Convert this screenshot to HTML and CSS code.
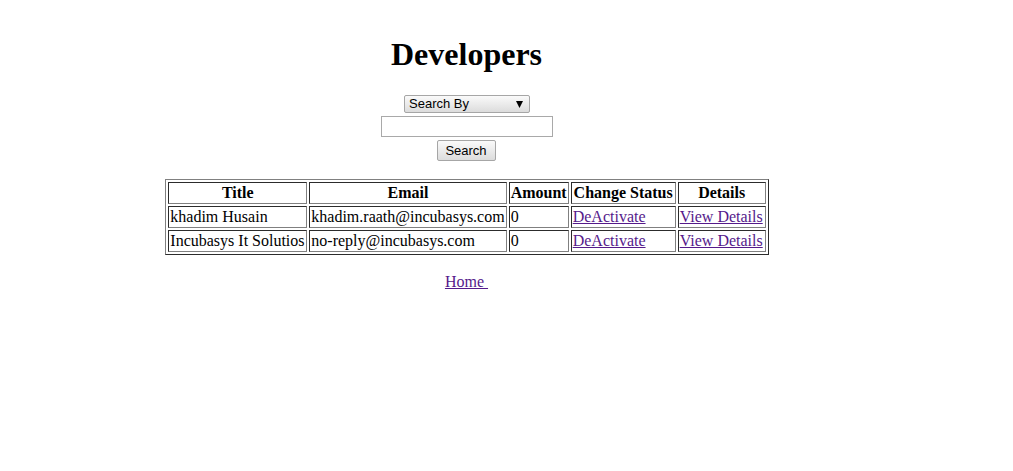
FILE: index.html
```html
<!DOCTYPE html>
<html>
<head>
<meta charset="utf-8">
<link rel="stylesheet" href="styles.css">
<title>Developers</title>
</head>
<body>
<div class="page">
  <h1 class="title">Developers</h1>
  <form class="search">
    <select class="search-by">
      <option>Search By</option>
    </select>
    <input class="search-input" type="text">
    <button class="search-btn" type="button">Search</button>
  </form>
  <table class="grid">
    <tr>
      <th class="col-title">Title</th>
      <th>Email</th>
      <th>Amount</th>
      <th class="col-status">Change Status</th>
      <th class="col-details">Details</th>
    </tr>
    <tr>
      <td>khadim Husain</td>
      <td>khadim.raath@incubasys.com</td>
      <td>0</td>
      <td><a href="#">DeActivate</a></td>
      <td><a href="#">View Details</a></td>
    </tr>
    <tr>
      <td>Incubasys It Solutios</td>
      <td>no-reply@incubasys.com</td>
      <td>0</td>
      <td><a href="#">DeActivate</a></td>
      <td><a href="#">View Details</a></td>
    </tr>
  </table>
  <p class="home"><a href="#">Home&nbsp;</a></p>
</div>
</body>
</html>
```

FILE: styles.css
```css
html, body {
  margin: 0;
  padding: 0;
  background: #fff;
}
body {
  font-family: "Liberation Serif", "Times New Roman", serif;
  font-size: 16px;
  color: #000;
}
.page {
  width: 918px;
  margin-left: 8px;
  padding-top: 36px;
  text-align: center;
}
.title {
  font-size: 32px;
  font-weight: bold;
  margin: 0 0 22px;
  padding-right: 1px;
  line-height: 37px;
}
.search {
  display: flex;
  flex-direction: column;
  align-items: center;
  gap: 3px;
  margin: 0 0 18px;
}
.search-by {
  -webkit-appearance: none;
  appearance: none;
  width: 126px;
  height: 18px;
  box-sizing: border-box;
  border: 1px solid #a6a6a6;
  border-radius: 2px;
  padding: 0 0 0 4px;
  font-family: "Liberation Sans", Arial, sans-serif;
  font-size: 13px;
  line-height: 16px;
  color: #000;
  background-color: #ececec;
  background-image: url("data:image/svg+xml;utf8,<svg xmlns='http://www.w3.org/2000/svg' width='7' height='7'><path d='M0 0H7L3.5 7Z' fill='black'/></svg>"), linear-gradient(#fafafa, #dcdcdc);
  background-repeat: no-repeat, no-repeat;
  background-position: right 6px center, 0 0;
  background-size: 7px 7px, 100% 100%;
}
.search-input {
  width: 172px;
  height: 21px;
  box-sizing: border-box;
  border: 1px solid #a9a9a9;
  padding: 1px 2px;
  margin: 0;
  font-family: "Liberation Sans", Arial, sans-serif;
  font-size: 13px;
}
.search-btn {
  width: 59px;
  height: 21px;
  box-sizing: border-box;
  border: 1px solid #a6a6a6;
  border-radius: 2px;
  padding: 0;
  margin-right: 2px;
  font-family: "Liberation Sans", Arial, sans-serif;
  font-size: 13px;
  color: #000;
  background: linear-gradient(#fafafa, #dcdcdc);
}
.grid {
  margin: 0 auto;
  border: 1px outset #808080;
  border-spacing: 2px;
  border-collapse: separate;
  text-align: left;
}
.grid th,
.grid td {
  border: 1px inset #808080;
  padding: 1px;
  white-space: nowrap;
}
.grid th {
  text-align: center;
  font-weight: bold;
}
.grid .col-title {
  width: 135px;
}
.grid .col-status {
  width: 101px;
}
.grid .col-details {
  width: 84px;
}
.grid a {
  color: #551a8b;
}
.home {
  margin: 18px 0 0;
  padding-right: 1px;
}
.home a {
  color: #551a8b;
}
```
